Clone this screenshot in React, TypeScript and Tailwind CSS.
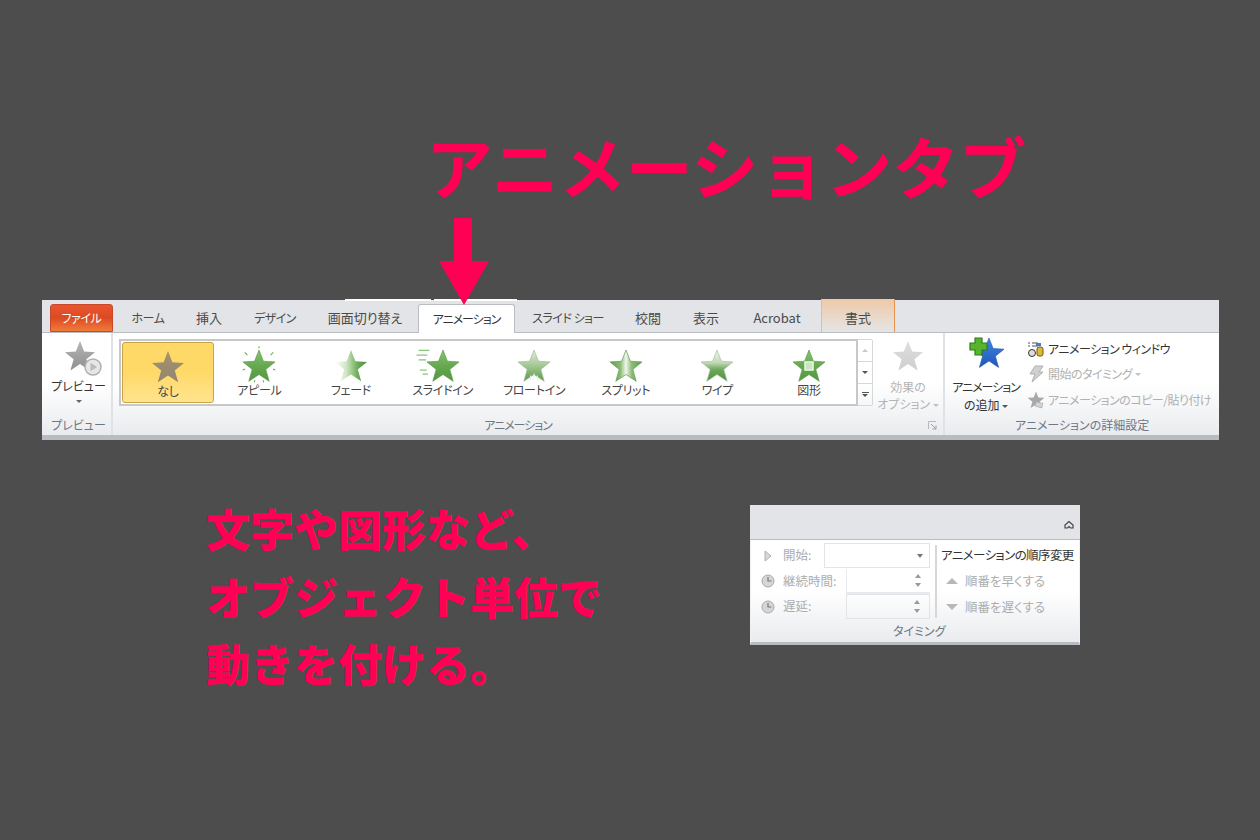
import React from 'react';

const jp = "font-['Noto_Sans_CJK_JP','Liberation_Sans',sans-serif]";
const palt = "[font-feature-settings:'palt']";
const STAR = '50,3 63,36 97,38 70,60 80,95 50,75 20,95 30,60 3,38 37,36';

const Star = ({ id, size = 34, stops, x2 = 0, y2 = 1, stroke = '#5c9a48', children }: {
  id: string;
  size?: number;
  stops: [number, string][];
  x2?: number;
  y2?: number;
  stroke?: string;
  children?: React.ReactNode;
}) => (
  <svg width={size} height={size} viewBox="0 0 100 100" className="block overflow-visible">
    <defs>
      <linearGradient id={id} x1="0" y1="0" x2={x2} y2={y2}>
        {stops.map(([o, c]) => <stop key={o} offset={o} stopColor={c} />)}
      </linearGradient>
    </defs>
    <polygon points={STAR} fill={`url(#${id})`} stroke={stroke} strokeWidth="2" strokeLinejoin="round" />
    {children}
  </svg>
);

const green: [number, string][] = [[0, '#86c46b'], [0.5, '#66a950'], [1, '#559640']];

const gallery: { label: string; icon: React.ReactNode; selected?: boolean }[] = [
  {
    label: 'なし',
    selected: true,
    icon: <Star id="s0" stroke="none" stops={[[0, '#a8926a'], [1, '#8f8672']]} />,
  },
  {
    label: 'アピール',
    icon: (
      <Star id="s1" stops={green}>
        <path d="M8 10l8 8M92 10l-8 8M50 -8v6M2 62l7-3M98 62l-7-3M36 98l2-6M64 98l-2-6" stroke="#6aa955" strokeWidth="3" />
      </Star>
    ),
  },
  {
    label: 'フェード',
    icon: <Star id="s2" x2={1} y2={0} stroke="none" stops={[[0, '#ffffff'], [0.35, '#cfe6c4'], [0.7, '#6fae5a'], [1, '#4f8f3e']]} />,
  },
  {
    label: 'スライドイン',
    icon: (
      <Star id="s3" stops={green}>
        <path d="M-22 4h32M-28 18h32M-22 32h22M-18 62h20M-10 74h16" stroke="#8cc47a" strokeWidth="3.5" />
      </Star>
    ),
  },
  {
    label: 'フロートイン',
    icon: (
      <Star id="s4" stroke="#9db894" stops={[[0, '#e4eedf'], [0.45, '#a9cc9b'], [1, '#5c9a48']]}>
        <path d="M40 92v-14M50 92v-20M60 92v-14" stroke="#e9f3e4" strokeWidth="3" />
      </Star>
    ),
  },
  {
    label: 'スプリット',
    icon: <Star id="s5" x2={1} y2={0} stops={[[0, '#5f9f4a'], [0.32, '#8abb76'], [0.5, '#f0f6ec'], [0.68, '#8abb76'], [1, '#5f9f4a']]} />,
  },
  {
    label: 'ワイプ',
    icon: <Star id="s6" stroke="#a8bea0" stops={[[0, '#f0f4ee'], [0.4, '#c3d9b9'], [0.62, '#6fa95b'], [1, '#4f8f3e']]} />,
  },
  {
    label: '図形',
    icon: (
      <Star id="s7" stops={green}>
        <rect x="38" y="38" width="24" height="24" fill="#c9e7bd" stroke="#eef8ea" strokeWidth="4" />
      </Star>
    ),
  },
];

const tabs: { label: string; w: string; cls?: string }[] = [
  { label: 'ホーム', w: 'w-[70px]', cls: 'text-[12px] tracking-[-0.4px]' },
  { label: '挿入', w: 'w-[52px]' },
  { label: 'デザイン', w: 'w-[80px]', cls: 'text-[12px] tracking-[-0.6px]' },
  { label: '画面切り替え', w: 'w-[100px]' },
];

const tabsAfter: { label: string; w: string; cls?: string }[] = [
  { label: 'スライド ショー', w: 'w-[106px]', cls: 'text-[12px] tracking-[-0.5px]' },
  { label: '校閲', w: 'w-[54px]' },
  { label: '表示', w: 'w-[62px]' },
  { label: 'Acrobat', w: 'w-[80px]' },
];

const Caret = ({ className = '' }: { className?: string }) => (
  <span className={`inline-block w-0 h-0 border-x-[3px] border-x-transparent border-t-[3px] ${className}`} />
);

const GroupLabel = ({ children, className = '' }: { children: React.ReactNode; className?: string }) => (
  <div className={`h-[21px] flex items-center justify-center text-[12px] text-[#6d7686] whitespace-nowrap ${className}`}>{children}</div>
);

const Clock = () => (
  <svg width="14" height="14" viewBox="0 0 14 14">
    <circle cx="7" cy="7" r="6" fill="#d6d6d6" stroke="#a8a8a8" />
    <path d="M7 3v4h3.5" stroke="#777" strokeWidth="1.2" fill="none" />
  </svg>
);

const Spinner = () => (
  <div className="w-[24px] flex flex-col items-center gap-[5px]">
    <span className="w-0 h-0 border-x-[3px] border-x-transparent border-b-[4px] border-b-[#9a9a9a]" />
    <span className="w-0 h-0 border-x-[3px] border-x-transparent border-t-[4px] border-t-[#9a9a9a]" />
  </div>
);

const App = () => {
  return (
    <div className={`w-[1260px] h-[840px] bg-[#4d4d4d] overflow-hidden ${jp}`}>
      {/* Title and arrow */}
      <div className="h-[218px] pt-[126px] pl-[426px] text-[67px] leading-[78px] font-bold text-[#ff0055] whitespace-nowrap">
        アニメーションタブ
      </div>
      <div className="relative z-10 h-[87px] -mb-[5px] pl-[439px]">
        <svg width="50" height="87" viewBox="0 0 50 87" className="block">
          <polygon points="15,0 33,0 33,43 50,43 25,87 0,43 15,43" fill="#ff0055" />
        </svg>
      </div>

      {/* Ribbon */}
      <div className={`ml-[42px] w-[1177px] h-[140px] flex flex-col ${palt}`}>
        <div className="relative h-[33px] bg-[#e2e4e7] border-b border-[#b9bcc1] flex items-end pl-[8px] text-[13px] text-[#4a4a4a]">
          <div className="w-[63px] h-[28px] flex items-center justify-center rounded-t-[3px] border border-[#c8492a] bg-gradient-to-b from-[#e9552e] via-[#dc4a22] to-[#f07a3c] text-white text-[12px] tracking-[-0.4px]">
            ファイル
          </div>
          {tabs.map((t) => (
            <div key={t.label} className={`${t.w} ${t.cls ?? ''} h-[28px] flex items-center justify-center`}>{t.label}</div>
          ))}
          <div className="ml-[3px] w-[97px] h-[29px] -mb-px flex items-center justify-center bg-white border border-b-0 border-[#b9bcc1] rounded-t-[3px] text-[#333] text-[12px] tracking-[-1px]">
            アニメーション
          </div>
          {tabsAfter.map((t) => (
            <div key={t.label} className={`${t.w} ${t.cls ?? ''} h-[28px] flex items-center justify-center`}>{t.label}</div>
          ))}
          <div className="ml-[4px] w-[74px] h-[33px] pt-[5px] flex items-center justify-center border-x border-[#f0b98c] border-r-[#e8924a] bg-gradient-to-b from-[#eec9a6] to-[#e4e5e7]">
            書式
          </div>
          <div className="absolute left-[303px] -top-[1px] w-[86px] h-[2px] bg-white" />
          <div className="absolute left-[392px] -top-[1px] w-[83px] h-[2px] bg-white" />
        </div>

        <div className="flex-1 flex bg-gradient-to-b from-white via-white to-[#e9ebee] border-b-[5px] border-[#b8bcc2] text-[12px]">
          {/* Preview */}
          <div className="w-[71px] flex flex-col border-r-2 border-[#dfe2e6]">
            <div className="flex-1 flex flex-col items-center pt-[7px] pl-[8px]">
              <div className="relative w-[36px] h-[32px] ml-[2px]">
                <Star id="p0" size={32} stroke="none" stops={[[0, '#b5b5b5'], [1, '#8f8f8f']]} />
                <svg width="18" height="18" viewBox="0 0 18 18" className="absolute -right-[2px] bottom-[-4px]">
                  <circle cx="9" cy="9" r="8" fill="#e6e6e6" stroke="#b0b0b0" strokeWidth="1.5" />
                  <polygon points="6,4 14,9 6,14" fill="#bcbcbc" stroke="#f5f5f5" strokeWidth="0.6" />
                </svg>
              </div>
              <div className="mt-[6px] text-[#333] leading-[16px] -ml-[4px]">プレビュー</div>
              <Caret className="mt-[6px] -ml-[4px] border-t-[#666]" />
            </div>
            <GroupLabel className="pl-[4px]">プレビュー</GroupLabel>
          </div>

          {/* Animation gallery */}
          <div className="w-[832px] flex flex-col border-r-2 border-[#dfe2e6]">
            <div className="flex-1 flex pt-[6px] pl-[6px]">
              <div className="w-[739px] h-[67px] flex border-2 border-[#c8c8c8] bg-white pl-[1px] pt-[1px]">
                {gallery.map((g) => (
                  <div
                    key={g.label}
                    className={`w-[91.6px] h-[61px] flex flex-col items-center pt-[7px] text-[#444] ${g.selected ? 'rounded-[3px] border border-[#c9a24a] bg-gradient-to-b from-[#ffd967] via-[#ffd967] to-[#ffe48f]' : ''}`}
                  >
                    <div className="h-[31px]">{g.icon}</div>
                    <div className="mt-[2px] leading-[16px] whitespace-nowrap tracking-[-0.3px]">{g.label}</div>
                  </div>
                ))}
              </div>
              <div className="w-[15px] h-[67px] flex flex-col border border-l-0 border-[#d5d8dc] rounded-r-[2px]">
                <div className="flex-1 flex items-center justify-center border-b border-[#d5d8dc]">
                  <span className="w-0 h-0 border-x-[3px] border-x-transparent border-b-[3px] border-b-[#c8c8c8]" />
                </div>
                <div className="flex-1 flex items-center justify-center border-b border-[#d5d8dc]">
                  <Caret className="border-t-[#555]" />
                </div>
                <div className="flex-1 flex flex-col items-center justify-center gap-[1px]">
                  <span className="w-[7px] h-px bg-[#555]" />
                  <Caret className="border-t-[#555]" />
                </div>
              </div>
              <div className="w-[70px] flex flex-col items-center pt-[1px] text-[#b4b4b4]">
                <Star id="e0" size={32} stroke="none" stops={[[0, '#dedede'], [1, '#cecece']]} />
                <div className="mt-[6px] leading-[18px]">効果の</div>
                <div className="leading-[16px] whitespace-nowrap">オプション <Caret className="mb-[2px] border-t-[#c0c0c0]" /></div>
              </div>
            </div>
            <div className="relative">
              <GroupLabel className="pr-[20px] tracking-[-1px]">アニメーション</GroupLabel>
              <svg width="9" height="9" viewBox="0 0 9 9" className="absolute right-[6px] top-[7px]">
                <path d="M0.5 8V0.5H8" fill="none" stroke="#b5b9be" />
                <path d="M3 3l5 5M8 4.5V8H4.5" fill="none" stroke="#9aa0a8" />
              </svg>
            </div>
          </div>

          {/* Advanced animation */}
          <div className="flex-1 flex flex-col">
            <div className="flex-1 flex pt-[4px]">
              <div className="w-[82px] flex flex-col items-center">
                <div className="relative w-[36px] h-[36px] ml-[10px]">
                  <Star id="b0" size={32} stroke="#2a5bb0" stops={[[0, '#3f86e0'], [1, '#1f57b8']]} />
                  <svg width="19" height="19" viewBox="0 0 19 19" className="absolute -left-[4px] top-0">
                    <path d="M6 1h7v5h5v7h-5v5H6v-5H1V6h5z" fill="#58b32e" stroke="#2f7d1a" strokeWidth="1.2" />
                  </svg>
                </div>
                <div className="mt-[5px] leading-[18px] text-[#333] whitespace-nowrap tracking-[-1px]">アニメーション</div>
                <div className="leading-[17px] text-[#333] whitespace-nowrap">の追加 <Caret className="mb-[2px] border-t-[#555]" /></div>
              </div>
              <div className="flex-1 flex flex-col -mt-[1px] whitespace-nowrap tracking-[-0.5px]">
                <div className="h-[25px] flex items-center gap-[3px] text-[#333]">
                  <svg width="18" height="18" viewBox="0 0 18 18">
                    <path d="M1 3h2M1 6h2M5 3h6M5 6h6" stroke="#555" strokeWidth="1.2" />
                    <path d="M9 3l5 0v3l-5 0z" fill="#3f7fd6" />
                    <circle cx="5" cy="13" r="3.5" fill="#ddd" stroke="#333" />
                    <rect x="10" y="7" width="6" height="9" rx="2" fill="#e0b73a" stroke="#6d5a18" />
                  </svg>
                  アニメーション ウィンドウ
                </div>
                <div className="h-[26px] flex items-center gap-[3px] text-[#b0b0b0]">
                  <svg width="18" height="18" viewBox="0 0 18 18">
                    <path d="M8 1h8l-4 6h4L5 17l3-8H3z" fill="#d0d0d0" stroke="#b0b0b0" />
                  </svg>
                  開始のタイミング <Caret className="border-t-[#c0c0c0]" />
                </div>
                <div className="h-[25px] flex items-center gap-[3px] text-[#b0b0b0]">
                  <svg width="18" height="18" viewBox="0 0 100 100">
                    <polygon points={STAR} fill="#a8a8a8" />
                    <path d="M50 60l38 8-6 26-36-10z" fill="#d4d4d4" stroke="#a8a8a8" strokeWidth="4" />
                  </svg>
                  アニメーションのコピー/貼り付け
                </div>
              </div>
            </div>
            <GroupLabel>アニメーションの詳細設定</GroupLabel>
          </div>
        </div>
      </div>

      {/* Bottom row */}
      <div className="mt-[65px] flex">
        <div className="ml-[206px] -mt-[10px] w-[544px] text-[44px] leading-[67.5px] font-black text-[#ff0055] whitespace-nowrap">
          <div>文字や図形など、</div>
          <div>オブジェクト単位で</div>
          <div>動きを付ける。</div>
        </div>

        {/* Timing panel */}
        <div className={`w-[330px] h-[140px] flex flex-col text-[12.5px] ${palt}`}>
          <div className="h-[35px] bg-[#e2e4e7] border-b border-[#b9bcc1] flex items-center justify-end pr-[6px] pt-[5px]">
            <svg width="10" height="10" viewBox="0 0 10 10">
              <path d="M1 8V5l4-3.5L9 5v3H6.5L5 6.5 3.5 8z" fill="none" stroke="#444" strokeWidth="1.2" />
            </svg>
          </div>
          <div className="flex-1 flex flex-col bg-gradient-to-b from-white via-white to-[#e9ebee] border-b-[3px] border-[#b8bcc2] border-x border-x-[#eef0f2]">
            <div className="flex-1 flex pt-[3px] pl-[10px]">
              <div className="w-[173px] flex flex-col text-[#adadad]">
                <div className="h-[25px] flex items-center">
                  <svg width="14" height="14" viewBox="0 0 14 14">
                    <polygon points="4,2 10,7 4,12" fill="#d8d8d8" stroke="#b0b0b0" />
                  </svg>
                  <span className="ml-[8px] w-[41px]">開始:</span>
                  <div className="w-[106px] h-[25px] flex items-center justify-end pr-[6px] border border-[#e2e4e8]">
                    <span className="w-0 h-0 border-x-[3px] border-x-transparent border-t-[4px] border-t-[#777]" />
                  </div>
                </div>
                <div className="h-[26px] flex items-center">
                  <Clock />
                  <span className="ml-[8px] w-[63px] whitespace-nowrap">継続時間:</span>
                  <div className="w-[84px] h-[25px] flex items-center justify-end border-b-2 border-[#dfe3ef] border-l border-[#e8eaee]">
                    <Spinner />
                  </div>
                </div>
                <div className="h-[25px] flex items-center">
                  <Clock />
                  <span className="ml-[8px] w-[63px]">遅延:</span>
                  <div className="w-[84px] h-[25px] flex items-center justify-end border border-[#e2e4e8]">
                    <Spinner />
                  </div>
                </div>
              </div>
              <div className="ml-[1px] mt-[2px] w-[2px] h-[73px] bg-[#d5d7da]" />
              <div className="ml-[4px] flex flex-col">
                <div className="h-[25px] flex items-center text-[#333] whitespace-nowrap tracking-[-0.6px]">アニメーションの順序変更</div>
                <div className="h-[26px] flex items-center text-[#adadad] whitespace-nowrap">
                  <span className="ml-[5px] mr-[7px] w-0 h-0 border-x-[6px] border-x-transparent border-b-[6px] border-b-[#b8b8b8]" />
                  順番を早くする
                </div>
                <div className="h-[26px] flex items-center text-[#adadad] whitespace-nowrap">
                  <span className="ml-[5px] mr-[7px] w-0 h-0 border-x-[6px] border-x-transparent border-t-[6px] border-t-[#b8b8b8]" />
                  順番を遅くする
                </div>
              </div>
            </div>
            <div className="-mt-[3px] h-[22px] w-[330px] pl-[142px] text-[12px] text-[#6d7686] flex items-center">タイミング</div>
          </div>
        </div>
      </div>
    </div>
  );
};

export default App;
